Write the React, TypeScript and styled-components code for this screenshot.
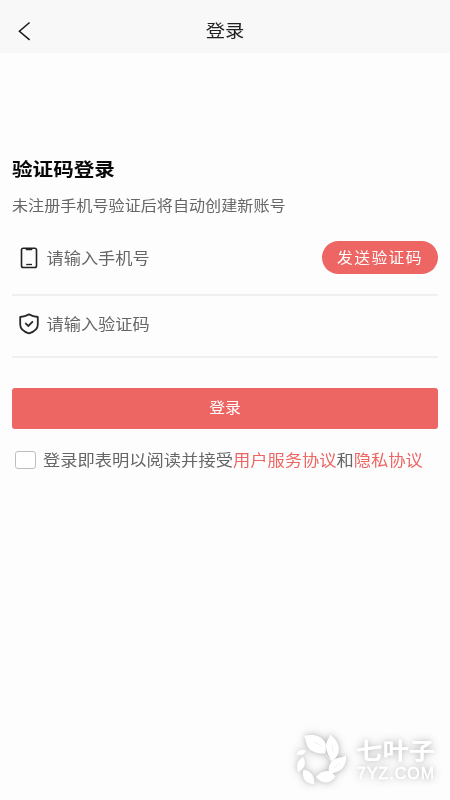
import React from 'react';
import styled, { createGlobalStyle } from 'styled-components';

const GlobalStyle = createGlobalStyle`
  * { box-sizing: border-box; }
  body {
    margin: 0;
    background: #fdfdfd;
    font-family: "Noto Sans CJK SC", "Noto Sans", sans-serif;
  }
  button { font-family: inherit; border: 0; padding: 0; cursor: pointer; }
`;

const Screen = styled.div`
  position: relative;
  width: 450px;
  height: 800px;
  overflow: hidden;
  background: #fdfdfd;
`;

const Header = styled.header`
  display: grid;
  grid-template-columns: 50px 1fr 50px;
  align-items: center;
  height: 53px;
  padding-top: 9px;
  background: #f8f8f8;
`;

const BackButton = styled.button`
  display: flex;
  height: 20px;
  padding-left: 17px;
  background: none;
`;

const Label = styled.span<{ $size: number; $color: string; $weight?: number; $spacing?: number }>`
  display: inline-block;
  font-size: ${(p) => p.$size}px;
  line-height: 24px;
  font-weight: ${(p) => p.$weight ?? 400};
  letter-spacing: ${(p) => p.$spacing ?? 0}px;
  color: ${(p) => p.$color};
  white-space: nowrap;
  transform: scaleY(0.9);
`;

const PageTitle = styled.h1`
  display: flex;
  justify-content: center;
  margin: 0;
  padding-bottom: 2px;
`;

const Content = styled.main`
  padding: 103px 12px 0;
`;

const Heading = styled.h2`
  display: flex;
  height: 24px;
  margin: 0 0 13px;
`;

const Hint = styled.p`
  display: flex;
  height: 24px;
  margin: 0;
`;

const Field = styled.div<{ $height: number; $top?: number; $bottom?: number }>`
  display: flex;
  align-items: center;
  height: ${(p) => p.$height}px;
  padding: ${(p) => p.$top ?? 0}px 0 ${(p) => p.$bottom ?? 0}px 7px;
  border-bottom: 2px solid #f0f0f0;
`;

const FieldIcon = styled.span`
  display: flex;
  width: 27.5px;
`;

const SendButton = styled.button`
  display: flex;
  align-items: center;
  justify-content: center;
  width: 116.5px;
  height: 33px;
  margin-left: auto;
  padding-left: 0.5px;
  border-radius: 17px;
  background: #ed6663;
`;

const LoginButton = styled.button`
  display: flex;
  align-items: center;
  justify-content: center;
  width: 100%;
  height: 41px;
  margin-top: 30px;
  padding-bottom: 1px;
  border-radius: 3px;
  background: #ed6663;
`;

const Agreement = styled.div`
  display: flex;
  align-items: center;
  height: 24px;
  margin-top: 19px;
  padding-left: 3px;
`;

const Checkbox = styled.span`
  width: 21px;
  height: 18px;
  margin-right: 7px;
  border: 1px solid #bebebe;
  border-radius: 3px;
  background: #fff;
`;

const Link = styled.a`
  color: #ed6663;
`;

const Watermark = styled.div`
  position: absolute;
  left: 288px;
  top: 726px;
  display: flex;
  width: 162px;
  height: 70px;
  color: #fff;
  filter: drop-shadow(0 0 5px rgba(0, 0, 0, 0.24)) drop-shadow(0 0 2px rgba(0, 0, 0, 0.1));
`;

const BrandText = styled.div`
  display: flex;
  flex-direction: column;
  padding: 6px 0 0 6px;
`;

const BrandName = styled.span`
  width: 80px;
  height: 34px;
  font-size: 26.4px;
  line-height: 34px;
  font-weight: 700;
  white-space: nowrap;
  transform: scaleY(0.88);
`;

const BrandDomain = styled.span`
  padding-left: 1px;
  font: 400 16px/16px "Liberation Sans", Arial, sans-serif;
  letter-spacing: 1px;
  -webkit-text-stroke: 0.5px #fff;
`;

const BackIcon = () => (
  <svg width="15" height="20" viewBox="0 0 15 20" fill="none" stroke="#181818" strokeWidth="1.5">
    <path d="M12.6 1.5 2.4 10.3 12.6 18.9" />
  </svg>
);

const PhoneIcon = () => (
  <svg width="20" height="22" viewBox="0 0 20 22" fill="none" stroke="#222" strokeWidth="1.6">
    <rect x="2.5" y="1.3" width="15" height="19.2" rx="1.8" />
    <path d="M6 1.3 7.2 3.3H12.8L14 1.3Z" fill="#222" stroke="none" />
    <path d="M7.2 17.5H13" strokeWidth="1.3" />
  </svg>
);

const ShieldIcon = () => (
  <svg width="20" height="22" viewBox="0 0 20 22" fill="none" stroke="#292929" strokeWidth="1.8">
    <path d="M10 1.4C7.5 2.8 4.8 3.7 1.2 4V11.5C1.2 15.8 4.8 18.8 10 20.4C15.2 18.8 18.8 15.8 18.8 11.5V4C15.2 3.7 12.5 2.8 10 1.4Z" strokeLinejoin="round" />
    <path d="M6.3 10.2 9.3 12.9 13.9 8.3" />
  </svg>
);

const LeafMark = () => (
  <svg width="62" height="66" viewBox="0 0 62 66" fill="currentColor">
    <path d="M16 10C25 7.5 33 9.5 37 16C39 20 38.5 24 37 27.5C28 28 21 25 19 19C17.5 16 18 13 16 10Z" />
    <path d="M42 8.5C49 13.5 52 20 50.5 27C49 31 46 34 43 35.5C42 30 38 27 38 20C38 15 41 13 42 8.5Z" />
    <path d="M58 29.5C59 39 54 47 41 47.5C40 41 42 36 46 33.5C50 31 55 32 58 29.5Z" />
    <path d="M28 51C34 43 43 43 47.5 50.5C42 58 35 59 28 51Z" />
    <path d="M15.5 43.5C23 45 27 50 26 58C18 58 13 52 15.5 43.5Z" />
    <path d="M15 31C19 37 16.5 43 10 46C8 39 9.5 34 15 31Z" />
    <path d="M8.5 28.5C10 24 14 23 18 24.5C16.5 28.5 12.5 30 8.5 28.5Z" />
    <g fill="none" stroke="#ececec" strokeWidth=".8">
      <path d="M26 16 34 20M44 19 45 26M52 37 46 42M38 18 37 27 43 36" />
    </g>
  </svg>
);

export default function App() {
  return (
    <>
      <GlobalStyle />
      <Screen>
        <Header>
          <BackButton aria-label="返回"><BackIcon /></BackButton>
          <PageTitle><Label $size={19.3} $color="#202020">登录</Label></PageTitle>
        </Header>
        <Content>
          <Heading><Label $size={20.6} $color="#080808" $weight={700}>验证码登录</Label></Heading>
          <Hint><Label $size={16.1} $color="#666">未注册手机号验证后将自动创建新账号</Label></Hint>
          <Field $height={79} $top={4}>
            <FieldIcon><PhoneIcon /></FieldIcon>
            <Label $size={17.2} $color="#666">请输入手机号</Label>
            <SendButton><Label $size={15.8} $color="#fff" $spacing={1.4}>发送验证码</Label></SendButton>
          </Field>
          <Field $height={62} $bottom={4}>
            <FieldIcon><ShieldIcon /></FieldIcon>
            <Label $size={17.2} $color="#666">请输入验证码</Label>
          </Field>
          <LoginButton><Label $size={15.8} $color="#fff">登录</Label></LoginButton>
          <Agreement>
            <Checkbox role="checkbox" aria-checked={false} />
            <Label $size={17.27} $color="#666">
              登录即表明以阅读并接受<Link>用户服务协议</Link>和<Link>隐私协议</Link>
            </Label>
          </Agreement>
        </Content>
        <Watermark>
          <LeafMark />
          <BrandText>
            <BrandName>七叶子</BrandName>
            <BrandDomain>7YZ.COM</BrandDomain>
          </BrandText>
        </Watermark>
      </Screen>
    </>
  );
}
